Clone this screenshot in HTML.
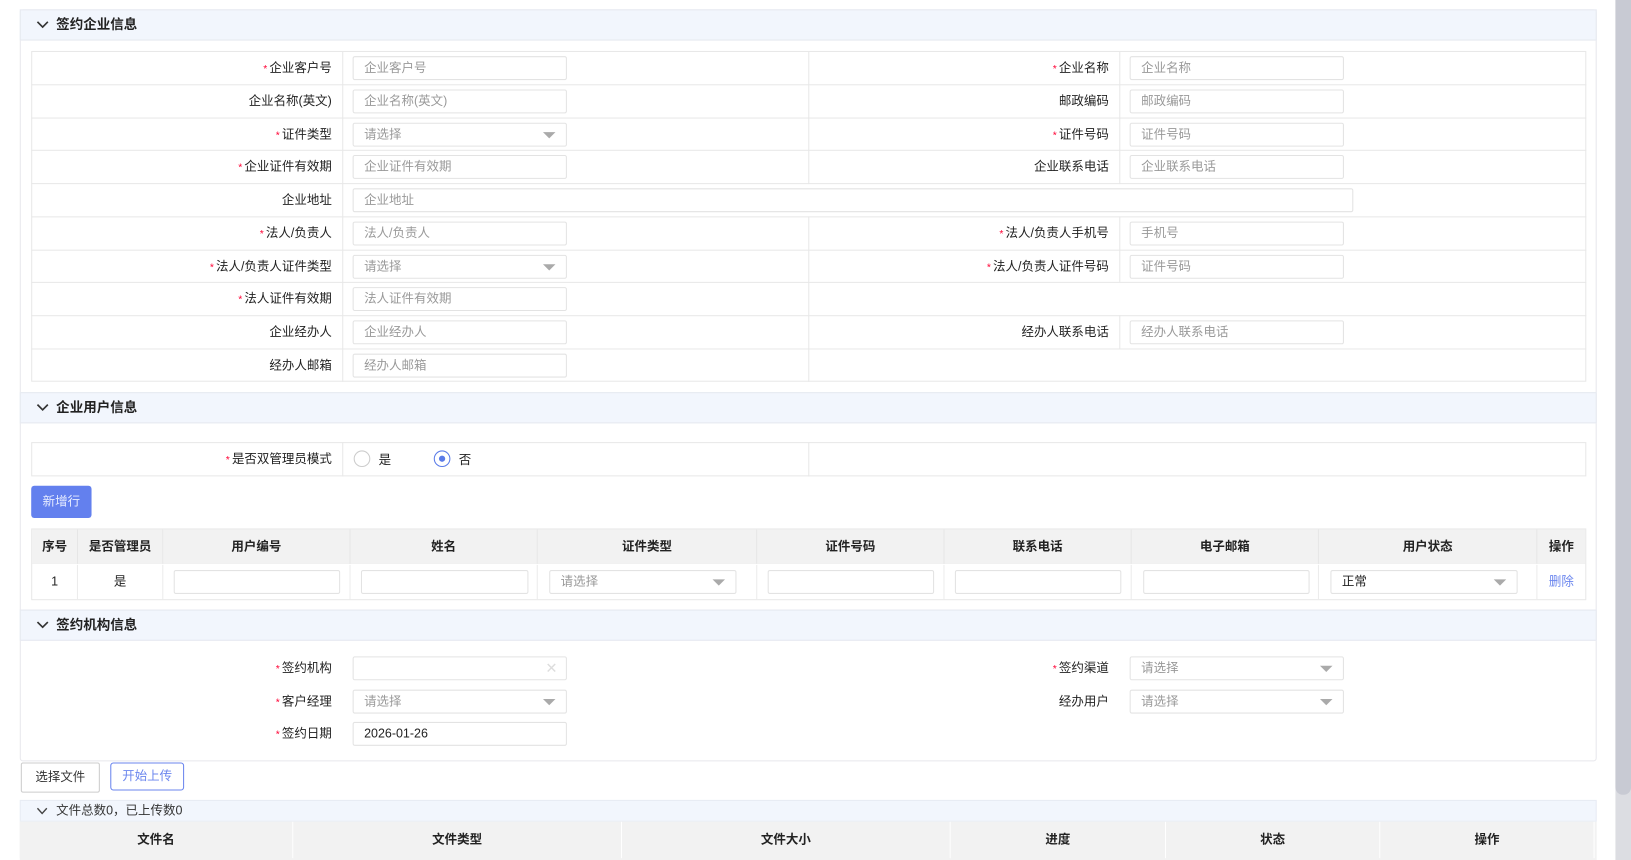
<!DOCTYPE html>
<html><head><meta charset="utf-8"><style>
html,body{margin:0;padding:0;width:1631px;height:860px;overflow:hidden;background:#fff;font-family:"Liberation Sans","Noto Sans CJK SC",sans-serif;}
#w{position:absolute;left:0;top:0;width:1568px;height:827px;transform:scale(1.0402);transform-origin:0 0;}
div,span{box-sizing:border-box;}
.a{position:absolute;}
.hd{position:absolute;left:19px;width:1516px;height:30px;background:#f2f6fd;border:1px solid #e6e9f0;font-size:13px;font-weight:bold;color:#222;line-height:28px;padding-left:34px;}
.hd svg{position:absolute;left:15px;top:9px;}
.lb{position:absolute;font-size:12px;color:#222;text-align:right;width:280px;line-height:14px;}
.lb i{color:#f03;font-style:normal;font-size:10px;margin-right:2px;}
.in{position:absolute;border:1px solid #e3e3e3;border-radius:2px;height:23px;font-size:12px;color:#999;padding-left:10px;line-height:21px;background:#fff;}
.in.s:after{content:"";position:absolute;right:10px;top:8px;border-left:6px solid transparent;border-right:6px solid transparent;border-top:6px solid #aaa;}
.th{position:absolute;background:#f2f2f2;border-right:1px solid #e6e6e6;font-size:12px;font-weight:bold;color:#222;text-align:center;}
.td{position:absolute;border-right:1px solid #ececec;font-size:12px;color:#222;text-align:center;}
</style></head><body><div id="w">
<div class="a" style="left:19px;top:9px;width:1516px;height:723px;border:1px solid #e8e8ec;border-radius:3px;"></div>
<div class="hd" style="top:9px">
<svg width="12" height="10" viewBox="0 0 12 10"><path d="M1 2 L6 7 L11 2" fill="none" stroke="#333" stroke-width="1.6"/></svg>签约企业信息</div>
<div class="a" style="left:30px;top:49px;width:1495px;height:318px;border:1px solid #e8e8e8;"></div>
<div class="a" style="left:329px;top:49px;width:1px;height:318px;background:#e8e8e8"></div>
<div class="a" style="left:777px;top:49px;width:1px;height:128px;background:#e8e8e8"></div>
<div class="a" style="left:777px;top:208px;width:1px;height:159px;background:#e8e8e8"></div>
<div class="a" style="left:1076px;top:49px;width:1px;height:128px;background:#e8e8e8"></div>
<div class="a" style="left:1076px;top:208px;width:1px;height:63px;background:#e8e8e8"></div>
<div class="a" style="left:1076px;top:303px;width:1px;height:32px;background:#e8e8e8"></div>
<div class="a" style="left:30px;top:81px;width:1495px;height:1px;background:#e8e8e8"></div>
<div class="a" style="left:30px;top:113px;width:1495px;height:1px;background:#e8e8e8"></div>
<div class="a" style="left:30px;top:144px;width:1495px;height:1px;background:#e8e8e8"></div>
<div class="a" style="left:30px;top:176px;width:1495px;height:1px;background:#e8e8e8"></div>
<div class="a" style="left:30px;top:208px;width:1495px;height:1px;background:#e8e8e8"></div>
<div class="a" style="left:30px;top:240px;width:1495px;height:1px;background:#e8e8e8"></div>
<div class="a" style="left:30px;top:271px;width:1495px;height:1px;background:#e8e8e8"></div>
<div class="a" style="left:30px;top:303px;width:1495px;height:1px;background:#e8e8e8"></div>
<div class="a" style="left:30px;top:335px;width:1495px;height:1px;background:#e8e8e8"></div>

<div class="lb" style="left:39px;top:58px"><i>*</i>企业客户号</div><div class="in" style="left:339px;top:54px;width:206px">企业客户号</div>
<div class="lb" style="left:786px;top:58px"><i>*</i>企业名称</div><div class="in" style="left:1086px;top:54px;width:206px">企业名称</div>
<div class="lb" style="left:39px;top:90px">企业名称(英文)</div><div class="in" style="left:339px;top:86px;width:206px">企业名称(英文)</div>
<div class="lb" style="left:786px;top:90px">邮政编码</div><div class="in" style="left:1086px;top:86px;width:206px">邮政编码</div>
<div class="lb" style="left:39px;top:122px"><i>*</i>证件类型</div><div class="in s" style="left:339px;top:118px;width:206px">请选择</div>
<div class="lb" style="left:786px;top:122px"><i>*</i>证件号码</div><div class="in" style="left:1086px;top:118px;width:206px">证件号码</div>
<div class="lb" style="left:39px;top:153px"><i>*</i>企业证件有效期</div><div class="in" style="left:339px;top:149px;width:206px">企业证件有效期</div>
<div class="lb" style="left:786px;top:153px">企业联系电话</div><div class="in" style="left:1086px;top:149px;width:206px">企业联系电话</div>
<div class="lb" style="left:39px;top:185px">企业地址</div><div class="in" style="left:339px;top:181px;width:962px">企业地址</div>
<div class="lb" style="left:39px;top:217px"><i>*</i>法人/负责人</div><div class="in" style="left:339px;top:213px;width:206px">法人/负责人</div>
<div class="lb" style="left:786px;top:217px"><i>*</i>法人/负责人手机号</div><div class="in" style="left:1086px;top:213px;width:206px">手机号</div>
<div class="lb" style="left:39px;top:249px"><i>*</i>法人/负责人证件类型</div><div class="in s" style="left:339px;top:245px;width:206px">请选择</div>
<div class="lb" style="left:786px;top:249px"><i>*</i>法人/负责人证件号码</div><div class="in" style="left:1086px;top:245px;width:206px">证件号码</div>
<div class="lb" style="left:39px;top:280px"><i>*</i>法人证件有效期</div><div class="in" style="left:339px;top:276px;width:206px">法人证件有效期</div>
<div class="lb" style="left:39px;top:312px">企业经办人</div><div class="in" style="left:339px;top:308px;width:206px">企业经办人</div>
<div class="lb" style="left:786px;top:312px">经办人联系电话</div><div class="in" style="left:1086px;top:308px;width:206px">经办人联系电话</div>
<div class="lb" style="left:39px;top:344px">经办人邮箱</div><div class="in" style="left:339px;top:340px;width:206px">经办人邮箱</div>

<div class="hd" style="top:377px"><svg width="12" height="10" viewBox="0 0 12 10"><path d="M1 2 L6 7 L11 2" fill="none" stroke="#333" stroke-width="1.6"/></svg>企业用户信息</div>
<div class="a" style="left:30px;top:425px;width:1495px;height:33px;border:1px solid #e8e8e8;"></div>
<div class="a" style="left:329px;top:425px;width:1px;height:33px;background:#e8e8e8"></div>
<div class="a" style="left:777px;top:425px;width:1px;height:33px;background:#e8e8e8"></div>
<div class="lb" style="left:39px;top:434px"><i>*</i>是否双管理员模式</div>
<div class="a" style="left:340px;top:433px;width:16px;height:16px;border:1px solid #ccc;border-radius:50%"></div>
<div class="a" style="left:364px;top:433px;font-size:12px;color:#222">是</div>
<div class="a" style="left:417px;top:433px;width:16px;height:16px;border:1px solid #5a7be8;border-radius:50%"><div class="a" style="left:4px;top:4px;width:6px;height:6px;border-radius:50%;background:#5a7be8"></div></div>
<div class="a" style="left:441px;top:433px;font-size:12px;color:#222">否</div>
<div class="a" style="left:30px;top:467px;width:58px;height:31px;background:#6380ee;border-radius:3px;color:#e8edff;font-size:12px;line-height:31px;text-align:center">新增行</div>
<div class="a" style="left:30px;top:508px;width:1495px;height:69px;border:1px solid #e8e8e8;"></div>
<div class="a" style="left:31px;top:509px;width:1493px;height:33px;background:#f2f2f2;border-bottom:1px solid #e8e8e8"></div>
<div class="th" style="left:31px;top:509px;width:44px;height:33px;line-height:33px">序号</div>
<div class="th" style="left:75px;top:509px;width:82px;height:33px;line-height:33px">是否管理员</div>
<div class="th" style="left:157px;top:509px;width:180px;height:33px;line-height:33px">用户编号</div>
<div class="th" style="left:337px;top:509px;width:180px;height:33px;line-height:33px">姓名</div>
<div class="th" style="left:517px;top:509px;width:211px;height:33px;line-height:33px">证件类型</div>
<div class="th" style="left:728px;top:509px;width:180px;height:33px;line-height:33px">证件号码</div>
<div class="th" style="left:908px;top:509px;width:180px;height:33px;line-height:33px">联系电话</div>
<div class="th" style="left:1088px;top:509px;width:180px;height:33px;line-height:33px">电子邮箱</div>
<div class="th" style="left:1268px;top:509px;width:210px;height:33px;line-height:33px">用户状态</div>
<div class="th" style="left:1478px;top:509px;width:46px;height:33px;line-height:33px;border-right:0">操作</div>
<div class="td" style="left:31px;top:543px;width:44px;height:33px;line-height:33px">1</div>
<div class="td" style="left:75px;top:543px;width:82px;height:33px;line-height:33px">是</div>
<div class="td" style="left:157px;top:543px;width:180px;height:33px"></div>
<div class="td" style="left:337px;top:543px;width:180px;height:33px"></div>
<div class="td" style="left:517px;top:543px;width:211px;height:33px"></div>
<div class="td" style="left:728px;top:543px;width:180px;height:33px"></div>
<div class="td" style="left:908px;top:543px;width:180px;height:33px"></div>
<div class="td" style="left:1088px;top:543px;width:180px;height:33px"></div>
<div class="td" style="left:1268px;top:543px;width:210px;height:33px"></div>
<div class="a" style="left:1478px;top:543px;width:46px;height:33px;line-height:33px;text-align:center;font-size:12px;color:#6b86ee">删除</div>
<div class="in" style="left:167px;top:548px;width:160px"></div>
<div class="in" style="left:347px;top:548px;width:161px"></div>
<div class="in s" style="left:528px;top:548px;width:180px">请选择</div>
<div class="in" style="left:738px;top:548px;width:160px"></div>
<div class="in" style="left:918px;top:548px;width:160px"></div>
<div class="in" style="left:1099px;top:548px;width:160px"></div>
<div class="in s" style="left:1279px;top:548px;width:180px;color:#222">正常</div>

<div class="hd" style="top:586px"><svg width="12" height="10" viewBox="0 0 12 10"><path d="M1 2 L6 7 L11 2" fill="none" stroke="#333" stroke-width="1.6"/></svg>签约机构信息</div>
<div class="lb" style="left:39px;top:635px"><i>*</i>签约机构</div>
<div class="in" style="left:339px;top:631px;width:206px"><span class="a" style="right:8px;top:0;color:#ddd;font-size:14px">✕</span></div>
<div class="lb" style="left:786px;top:635px"><i>*</i>签约渠道</div><div class="in s" style="left:1086px;top:631px;width:206px">请选择</div>
<div class="lb" style="left:39px;top:667px"><i>*</i>客户经理</div><div class="in s" style="left:339px;top:663px;width:206px">请选择</div>
<div class="lb" style="left:786px;top:667px">经办用户</div><div class="in s" style="left:1086px;top:663px;width:206px">请选择</div>
<div class="lb" style="left:39px;top:698px"><i>*</i>签约日期</div><div class="in" style="left:339px;top:694px;width:206px;color:#222">2026-01-26</div>

<div class="a" style="left:20px;top:733px;width:76px;height:29px;border:1px solid #ccc;border-radius:2px;font-size:12px;color:#333;text-align:center;line-height:27px">选择文件</div>
<div class="a" style="left:106px;top:733px;width:71px;height:27px;border:1px solid #6b86ee;border-radius:3px;font-size:12px;color:#6b86ee;text-align:center;line-height:25px">开始上传</div>
<div class="a" style="left:19px;top:769px;width:1516px;height:21px;background:#f2f6fd;border:1px solid #e8ecf4;font-size:12px;color:#333;line-height:19px;padding-left:34px"><svg class="a" style="left:15px;top:6px" width="11" height="8" viewBox="0 0 11 8"><path d="M1 1 L5.5 6 L10 1" fill="none" stroke="#444" stroke-width="1.3"/></svg>文件总数0，已上传数0</div>
<div class="a" style="left:19px;top:790px;width:1516px;height:37px;background:#f2f2f2"></div>
<div class="th" style="left:19px;top:790px;width:263px;height:35px;line-height:35px;border-right:1px solid #fff">文件名</div>
<div class="th" style="left:282px;top:790px;width:316px;height:35px;line-height:35px;border-right:1px solid #fff">文件类型</div>
<div class="th" style="left:598px;top:790px;width:316px;height:35px;line-height:35px;border-right:1px solid #fff">文件大小</div>
<div class="th" style="left:914px;top:790px;width:207px;height:35px;line-height:35px;border-right:1px solid #fff">进度</div>
<div class="th" style="left:1121px;top:790px;width:206px;height:35px;line-height:35px;border-right:1px solid #fff">状态</div>
<div class="th" style="left:1327px;top:790px;width:206px;height:35px;line-height:35px;border-right:1px solid #fff">操作</div>

<div class="a" style="left:1553px;top:0;width:15px;height:827px;background:#dcdde2"></div>
<div class="a" style="left:1553px;top:0;width:15px;height:764px;background:#c8cad3;border-radius:0 0 7px 7px"></div>
</div></body></html>
